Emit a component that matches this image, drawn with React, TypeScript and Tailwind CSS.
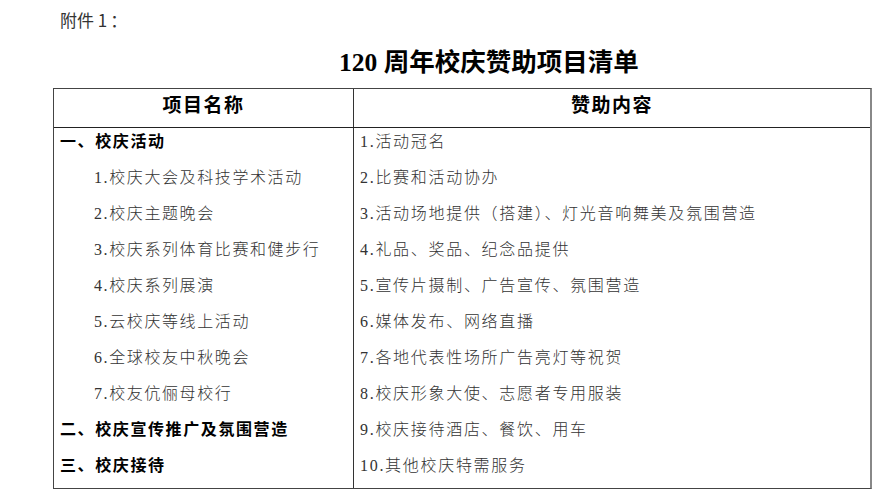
import React from 'react';

// 120周年校庆赞助项目清单 — attachment table

type Row = { left: string; right: string; heading?: boolean };

const ROWS: Row[] = [
  { left: '一、校庆活动', right: '1.活动冠名', heading: true },
  { left: '1.校庆大会及科技学术活动', right: '2.比赛和活动协办' },
  { left: '2.校庆主题晚会', right: '3.活动场地提供（搭建）、灯光音响舞美及氛围营造' },
  { left: '3.校庆系列体育比赛和健步行', right: '4.礼品、奖品、纪念品提供' },
  { left: '4.校庆系列展演', right: '5.宣传片摄制、广告宣传、氛围营造' },
  { left: '5.云校庆等线上活动', right: '6.媒体发布、网络直播' },
  { left: '6.全球校友中秋晚会', right: '7.各地代表性场所广告亮灯等祝贺' },
  { left: '7.校友伉俪母校行', right: '8.校庆形象大使、志愿者专用服装' },
  { left: '二、校庆宣传推广及氛围营造', right: '9.校庆接待酒店、餐饮、用车', heading: true },
  { left: '三、校庆接待', right: '10.其他校庆特需服务', heading: true },
];

const serif = "font-['Liberation_Serif','Noto_Sans_CJK_SC',serif]";

export default function App() {
  return (
    <div className="w-[879px] h-[494px] bg-white overflow-hidden">
      <div className="pt-[10px] pl-[60px] text-[17px] leading-[20px] text-[#333] font-['Noto_Sans_CJK_SC',sans-serif]">
        附件 1<span className="ml-[3px]">：</span>
      </div>

      <h1 className={`mt-[17px] pl-[339px] text-[25.5px] leading-[32px] font-bold text-black ${serif}`}>
        120 周年校庆赞助项目清单
      </h1>

      {/* Table */}
      <div className={`mt-[9px] ml-[53px] w-[819px] border-t border-l border-b border-[#444] border-r-2 border-r-[#888] ${serif}`}>
        <div className="flex h-[39px] border-b border-[#222]">
          <div className="w-[300px] flex items-center justify-center pb-[3px] border-r border-[#333] text-[19px] font-bold tracking-[1.5px] text-black">
            项目名称
          </div>
          <div className="flex-1 flex items-center justify-center pb-[3px] text-[19px] font-bold tracking-[1.5px] text-black">
            赞助内容
          </div>
        </div>

        {ROWS.map((row, i) => (
          <div key={i} className="flex h-[36px]">
            <div
              className={[
                'w-[300px] flex items-center pb-[8px] border-r border-[#333] text-[16px] tracking-[1.6px]',
                row.heading ? 'pl-[6px] font-bold text-black' : 'pl-[40px] font-light text-[#333]',
              ].join(' ')}
            >
              {row.left}
            </div>
            <div className="flex-1 flex items-center pb-[8px] pl-[6px] text-[16px] tracking-[1.7px] font-light text-[#333]">
              {row.right}
            </div>
          </div>
        ))}
      </div>
    </div>
  );
}
